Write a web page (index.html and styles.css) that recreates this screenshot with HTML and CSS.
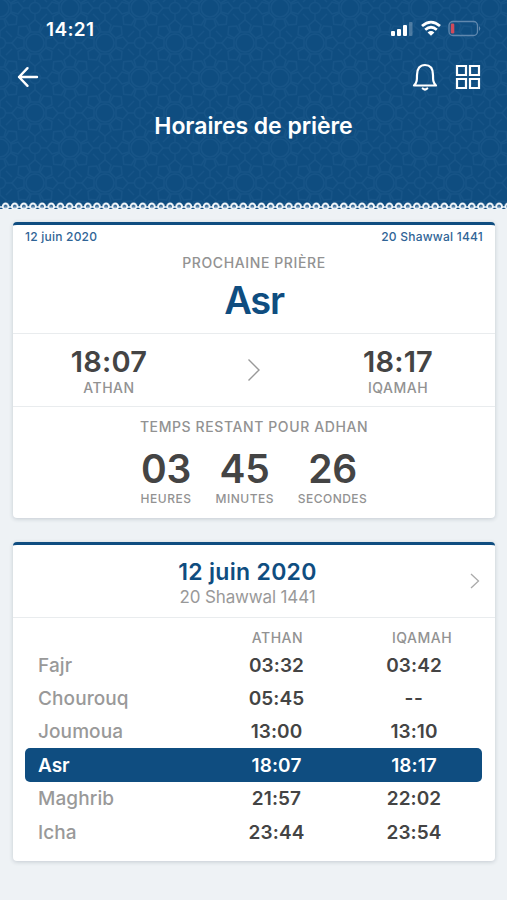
FILE: index.html
```html
<!DOCTYPE html>
<html lang="fr">
<head>
<meta charset="utf-8">
<meta name="viewport" content="width=device-width, initial-scale=1">
<title>Horaires de prière</title>
<link rel="stylesheet" href="styles.css">
</head>
<body>
<header class="header">
  <svg class="pattern" width="507" height="210" aria-hidden="true">
    <defs>
      <g id="rosette" fill="none" stroke="#246092" stroke-width="1.5">
        <circle r="9"/>
        <g id="petals">
          <path id="petal" d="M-4 -11 L4 -11 L6 -18 L0 -23 L-6 -18 Z"/>
          <use href="#petal" transform="rotate(45)"/>
          <use href="#petal" transform="rotate(90)"/>
          <use href="#petal" transform="rotate(135)"/>
          <use href="#petal" transform="rotate(180)"/>
          <use href="#petal" transform="rotate(225)"/>
          <use href="#petal" transform="rotate(270)"/>
          <use href="#petal" transform="rotate(315)"/>
        </g>
      </g>
      <g id="knot" fill="none" stroke="#246092" stroke-width="1.4">
        <circle r="5.5"/>
        <path d="M-12 -6 L-6 -12 M6 -12 L12 -6 M12 6 L6 12 M-6 12 L-12 6 M0 -12 V-6 M0 6 V12 M-12 0 H-6 M6 0 H12"/>
      </g>
      <pattern id="tiles" width="70" height="70" patternUnits="userSpaceOnUse" y="8">
        <use href="#rosette" x="35" y="35"/>
        <use href="#rosette"/><use href="#rosette" x="70"/>
        <use href="#rosette" y="70"/><use href="#rosette" x="70" y="70"/>
        <use href="#knot" x="35"/><use href="#knot" x="35" y="70"/>
        <use href="#knot" y="35"/><use href="#knot" x="70" y="35"/>
      </pattern>
      <pattern id="lace" width="9.14" height="10" patternUnits="userSpaceOnUse" x="1" y="201">
        <rect y="8" width="9.14" height="2" fill="#eef2f5"/>
        <path d="M0 6 H9.140" stroke="#dce8f1" stroke-width="1.600"/>
        <circle cx="4.57" cy="5.4" r="2.8" fill="#2b6292" stroke="#f4f8fb" stroke-width="2"/>
        <path d="M4.57 5.5 V8.5" stroke="#dce7ef" stroke-width="1"/>
      </pattern>
    </defs>
    <rect width="507" height="210" fill="url(#tiles)" opacity=".38"/>
    <rect y="201" width="507" height="9" fill="url(#lace)"/>
  </svg>
  <div class="status">
    <span class="clock">14:21</span>
    <svg class="indicators" width="92" height="18" viewBox="0 0 92 18">
      <g fill="#fff"><rect x="1" y="12" width="4" height="5" rx="1"/><rect x="7" y="10" width="4" height="7" rx="1"/><rect x="13" y="6" width="4" height="11" rx="1"/><rect x="19" y="3" width="3.5" height="14" rx="1" opacity=".25"/></g>
      <g fill="none" stroke="#fff" stroke-width="2.8"><path d="M32 7 Q41 -.8 50 7"/><path d="M35.2 10.8 Q41 5.800 46.8 10.8"/></g>
      <path d="M37.6 13.4 Q41 10.600 44.4 13.4 L41 16.8Z" fill="#fff"/>
      <rect x="59" y="2.500" width="28.5" height="14" rx="4" fill="none" stroke="#6088ae" stroke-width="1.3"/>
      <rect x="60.800" y="4.500" width="3.5" height="10" rx="1.3" fill="#d14b5b"/>
      <path d="M89 7 Q91.5 9.500 89 12Z" fill="#6088ae"/>
    </svg>
  </div>
  <nav class="nav">
    <svg width="22" height="22" viewBox="0 0 22 22" fill="none" stroke="#fff" stroke-width="2.4" stroke-linecap="round" stroke-linejoin="round"><path d="M20 11 H2 M10.5 2.2 L2 11 L10.5 19.8"/></svg>
    <div class="actions">
      <svg width="26" height="28" viewBox="0 0 26 28" fill="none" stroke="#fff" stroke-width="2.2" stroke-linecap="round" stroke-linejoin="round"><path d="M2 22.5 C5 19.5 5 17 5 12 C5 5.500 8 2 13 2 C18 2 21 5.500 21 12 C21 17 21 19.500 24 22.500 Z"/><path d="M10.800 25.500 Q13 27.500 15.200 25.500"/></svg>
      <svg width="26" height="26" viewBox="0 0 26 26" fill="none" stroke="#fff" stroke-width="2.2"><path d="M2 2 H11 V11 H2Z M15 2 H24 V11 H15Z M2 15 H11 V24 H2Z M15 15 H24 V24 H15Z"/></svg>
    </div>
  </nav>
  <h1 class="title">Horaires de prière</h1>
</header>
<main class="content">
  <section class="card next">
    <div class="top">
      <div class="dates"><span>12 juin 2020</span><span>20 Shawwal 1441</span></div>
      <p class="caption">PROCHAINE PRIÈRE</p>
      <h2 class="prayer">Asr</h2>
    </div>
    <div class="times">
      <div class="time"><b>18:07</b><span>ATHAN</span></div>
      <svg class="arrow" width="14" height="24" viewBox="0 0 14 24" fill="none" stroke="#999" stroke-width="1.4"><path d="M1.500 1.500 L12 12 L1.500 22.500"/></svg>
      <div class="time"><b>18:17</b><span>IQAMAH</span></div>
    </div>
    <div class="remaining">
      <p class="caption">TEMPS RESTANT POUR ADHAN</p>
      <div class="count">
        <div class="unit"><b>03</b><span>HEURES</span></div>
        <div class="unit"><b>45</b><span>MINUTES</span></div>
        <div class="unit"><b>26</b><span>SECONDES</span></div>
      </div>
    </div>
  </section>
  <section class="card day">
    <div class="dayhead">
      <h2>12 juin 2020</h2>
      <p>20 Shawwal 1441</p>
      <svg class="more" width="10" height="16" viewBox="0 0 10 16" fill="none" stroke="#aaa" stroke-width="1.3"><path d="M1 1 L8.500 8 L1 15"/></svg>
    </div>
    <div class="schedule">
      <div class="row labels"><span></span><span class="athan">ATHAN</span><span class="iqamah">IQAMAH</span></div>
      <div class="row"><span>Fajr</span><b>03:32</b><b>03:42</b></div>
      <div class="row"><span>Chourouq</span><b>05:45</b><b class="none">--</b></div>
      <div class="row"><span>Joumoua</span><b>13:00</b><b>13:10</b></div>
      <div class="row active"><span>Asr</span><b>18:07</b><b>18:17</b></div>
      <div class="row"><span>Maghrib</span><b>21:57</b><b>22:02</b></div>
      <div class="row"><span>Icha</span><b>23:44</b><b>23:54</b></div>
    </div>
  </section>
</main>
</body>
</html>
```

FILE: styles.css
```css
* { box-sizing: border-box; margin: 0; padding: 0; }
body { width: 507px; height: 900px; overflow: hidden; background: #eef2f5; color: #444; font-family: Inter, "Liberation Sans", sans-serif; }
svg { display: block; }
b { font-weight: 600; }
.header { position: relative; height: 210px; background: #0f4d80; color: #fff; }
.header > * { position: relative; }
.header > .pattern { position: absolute; inset: 0; }
.status { display: flex; justify-content: space-between; align-items: center; height: 58px; padding: 0 25px 0 46px; }
.clock { font-size: 19px; font-weight: 600; letter-spacing: .35px; }
.indicators { margin-top: -2px; }
.nav { display: flex; justify-content: space-between; align-items: center; height: 38px; padding: 0 26px 0 17px; }
.actions { display: flex; align-items: center; gap: 17px; }
.title { margin-top: 15px; text-align: center; font-size: 23px; line-height: 30px; font-weight: 600; letter-spacing: -.05px; }
.content { display: flex; flex-direction: column; gap: 24px; padding: 12px 12px 0 13px; }
.card { background: #fff; border-top: 3px solid #0f4d80; border-radius: 4px; box-shadow: 0 1px 4px rgba(30, 50, 70, .2); }
.next { height: 296px; }
.top { height: 109px; border-bottom: 1px solid #e9ecee; text-align: center; }
.dates { display: flex; justify-content: space-between; padding: 4px 12px 0; font-size: 12px; line-height: 16px; font-weight: 500; color: #2f6496; letter-spacing: .22px; }
.caption { font-size: 14px; line-height: 18px; font-weight: 500; color: #929292; letter-spacing: .6px; }
.top .caption { margin-top: 9px; }
.prayer { font-size: 38px; line-height: 46px; font-weight: 600; color: #0f4d80; margin-top: 5px; letter-spacing: -1.3px; }
.times { display: flex; align-items: center; justify-content: space-between; height: 73px; border-bottom: 1px solid #e9ecee; padding: 0 46px 0 45px; }
.time { width: 102px; padding-top: 2px; text-align: center; }
.time b { display: block; font-size: 29px; line-height: 34px; letter-spacing: .2px; }
.time span { display: block; font-size: 14px; line-height: 18px; font-weight: 500; color: #929292; letter-spacing: .5px; }
.arrow { margin-top: -1px; }
.remaining { text-align: center; padding-top: 11px; }
.count { display: grid; grid-template-columns: 51px 58px 70px; gap: 24px; justify-content: center; padding-top: 10px; }
.unit b { display: block; font-size: 39px; line-height: 46px; letter-spacing: -.3px; }
.unit span { display: block; margin-top: -1px; font-size: 12px; line-height: 16px; font-weight: 500; color: #929292; letter-spacing: .5px; }
.day { height: 319px; }
.dayhead { position: relative; height: 73px; padding-top: 13px; border-bottom: 1px solid #e9ecee; text-align: center; }
.dayhead h2 { padding-right: 13px; font-size: 23px; line-height: 29px; font-weight: 600; color: #0f4d80; letter-spacing: .3px; }
.dayhead p { padding-right: 13px; font-size: 17px; line-height: 21px; color: #999; letter-spacing: -.15px; }
.more { position: absolute; right: 15px; top: 28px; }
.schedule { padding: 8px 13px 0 12px; }
.row { display: grid; grid-template-columns: 182px 139px 136px; align-items: center; height: 33.400px; padding-top: 1px; border-radius: 5px; font-size: 19px; text-align: center; }
.row b { letter-spacing: .1px; }
.row > :first-child { text-align: left; padding-left: 13px; font-weight: 500; color: #999; letter-spacing: .1px; }
.row .none { letter-spacing: .6px; }
.labels { height: 22px; padding-top: 0; font-size: 14px; font-weight: 500; color: #929292; letter-spacing: .5px; }
.labels .athan { padding-left: 2px; }
.labels .iqamah { padding-left: 16px; }
.active { background: #0f4d80; color: #fff; }
.row.active > :first-child { color: #fff; font-weight: 600; letter-spacing: 0; }
```
